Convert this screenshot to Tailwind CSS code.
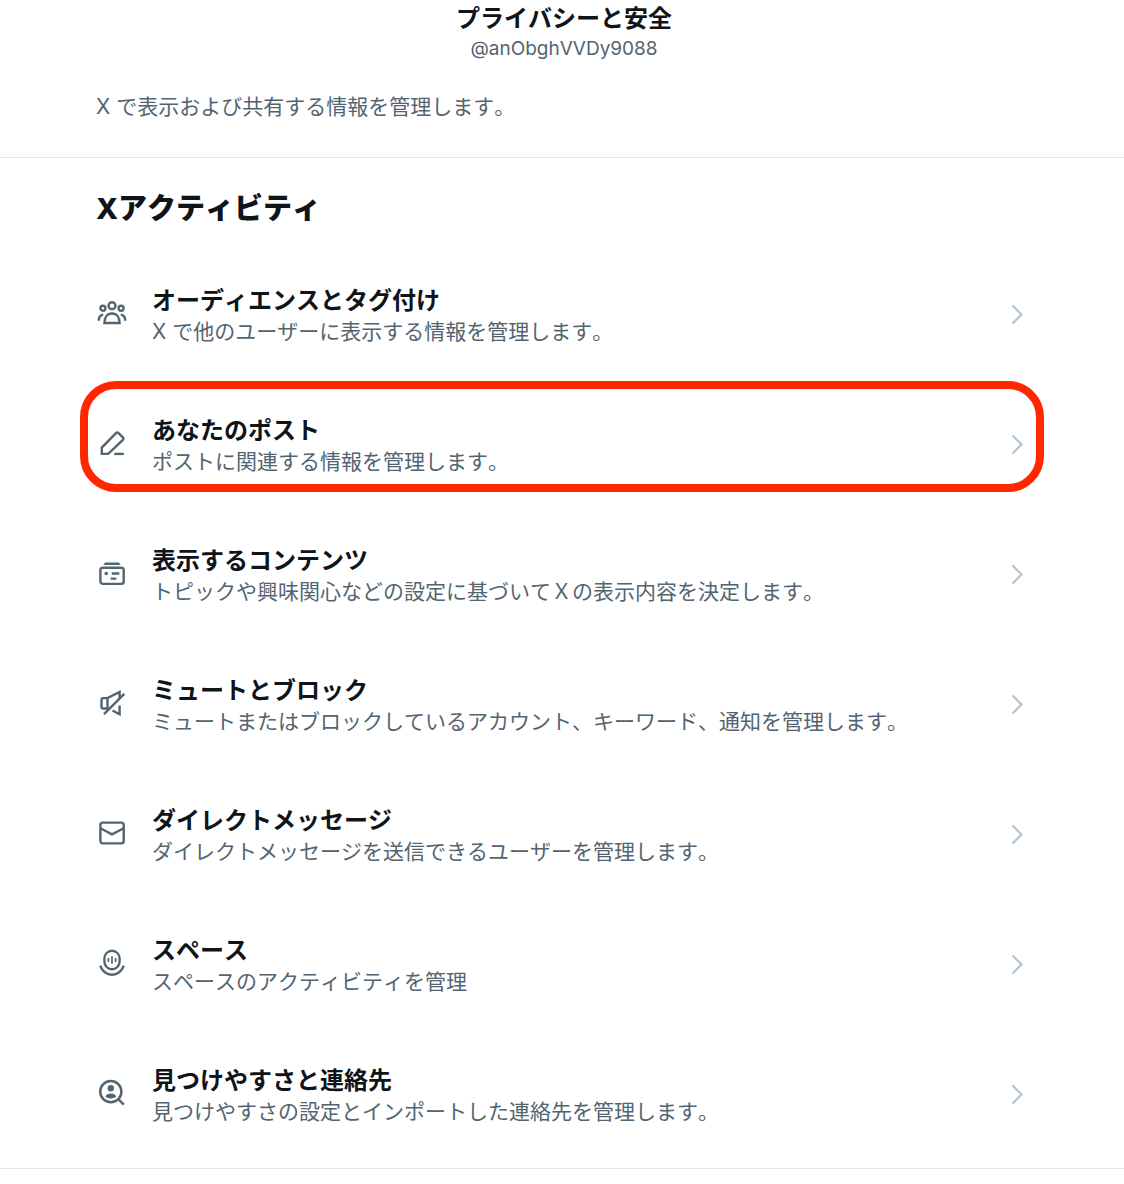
<!DOCTYPE html>
<html lang="ja">
<head>
    <meta charset="UTF-8" />
    <meta name="viewport" content="width=device-width, initial-scale=1.0" />
    <title>プライバシーと安全</title>
    <script src="https://cdn.jsdelivr.net/npm/@tailwindcss/browser@4"></script>
</head>
<body class="bg-white font-['Inter','Noto_Sans_CJK_JP',sans-serif] text-[#0f1419] [font-kerning:none]">

    <!-- Page header -->
    <header class="border-b border-[#e1e8ed]">
        <div class="pt-1 pl-1 text-center">
            <h1 class="text-2xl leading-[30px] font-bold">プライバシーと安全</h1>
            <p class="text-[19px] leading-[30px] text-[#536471]">@anObghVVDy9088</p>
        </div>
        <p class="px-24 pt-7 pb-[35px] text-[21px] leading-[30px] text-[#536471]">X で表示および共有する情報を管理します。</p>
    </header>

    <main class="border-b border-[#e1e8ed] pb-2">
        <h2 class="px-24 pt-8 pb-[22px] text-[29px] leading-[38px] font-extrabold">Xアクティビティ</h2>

        <nav>
            <!-- Audience -->
            <a href="#" class="flex h-[130px] items-center gap-6 px-24">
                <svg class="mb-1 size-8 shrink-0 text-[#536471]" viewBox="0 0 32 32" fill="none" stroke="currentColor" stroke-width="2.4">
                    <circle cx="16" cy="8.8" r="3.5" />
                    <circle cx="6.9" cy="11.2" r="2.5" />
                    <circle cx="25.1" cy="11.2" r="2.5" />
                    <path d="M8.4 26c0-5.4 2.8-9.5 7.6-9.5s7.6 4.1 7.6 9.5z" />
                    <path d="M2.7 23.8c.1-3.500 1.500-5.900 4.600-6.200M29.300 23.800c-.1-3.500-1.500-5.900-4.600-6.200" />
                </svg>
                <div class="flex-1 pt-0.5">
                    <h3 class="text-2xl leading-8 font-bold">オーディエンスとタグ付け</h3>
                    <p class="text-[21px] leading-[30px] text-[#536471]">X で他のユーザーに表示する情報を管理します。</p>
                </div>
                <svg class="size-6 shrink-0 text-[#b2c3cf]" viewBox="0 0 24 24" fill="none" stroke="currentColor" stroke-width="2.2">
                    <path d="M8.5 2.5l9 9-9 9" />
                </svg>
            </a>

            <!-- Your posts (highlighted) -->
            <a href="#" class="relative flex h-[130px] items-center gap-6 px-24">
                <span class="absolute inset-x-20 top-px h-[111px] rounded-[36px] border-8 border-[#ff2600]"></span>
                <svg class="mb-1 size-8 shrink-0 text-[#536471]" viewBox="0 0 32 32" fill="none" stroke="currentColor" stroke-width="2.4">
                    <path d="M5.8 26.9v-6.3L20 6.1q1.300-1.200 2.600 0l4.300 4.300q1.200 1.200 0 2.400L12.200 26.900z" />
                    <path d="M18.3 26.9h9.5" />
                </svg>
                <div class="flex-1 pt-0.5">
                    <h3 class="text-2xl leading-8 font-bold">あなたのポスト</h3>
                    <p class="text-[21px] leading-[30px] text-[#536471]">ポストに関連する情報を管理します。</p>
                </div>
                <svg class="size-6 shrink-0 text-[#b2c3cf]" viewBox="0 0 24 24" fill="none" stroke="currentColor" stroke-width="2.2">
                    <path d="M8.5 2.5l9 9-9 9" />
                </svg>
            </a>

            <!-- Content you see -->
            <a href="#" class="flex h-[130px] items-center gap-6 px-24">
                <svg class="mb-1 size-8 shrink-0 text-[#536471]" viewBox="0 0 32 32" fill="none" stroke="currentColor" stroke-width="2.4">
                    <rect x="4.4" y="10.7" width="23.3" height="16.2" rx="2.3" />
                    <path d="M9 5.6h14l1.6 2.4H7.4z" fill="currentColor" stroke="none" />
                    <circle cx="10.2" cy="16.5" r="1.7" fill="currentColor" stroke="none" />
                    <path d="M15.800 16.500h7.500M14.700 21.600h5.600" />
                </svg>
                <div class="flex-1 pt-0.5">
                    <h3 class="text-2xl leading-8 font-bold">表示するコンテンツ</h3>
                    <p class="text-[21px] leading-[30px] text-[#536471]">トピックや興味関心などの設定に基づいてＸの表示内容を決定します。</p>
                </div>
                <svg class="size-6 shrink-0 text-[#b2c3cf]" viewBox="0 0 24 24" fill="none" stroke="currentColor" stroke-width="2.2">
                    <path d="M8.5 2.5l9 9-9 9" />
                </svg>
            </a>

            <!-- Mute and block -->
            <a href="#" class="flex h-[130px] items-center gap-6 px-24">
                <svg class="mb-1 size-8 shrink-0 text-[#536471]" viewBox="0 0 32 32" fill="none" stroke="currentColor" stroke-width="2.4">
                    <path d="M12.5 21.5H7.2q-1.700 0-1.700-1.700v-7q0-1.700 1.700-1.700h4.300L23.600 5v6.500M11.500 11.100v10.400" />
                    <path d="M28.300 6.800L8 27.100" />
                    <path d="M23.600 18.500v8.700l-7.100-3.700" />
                </svg>
                <div class="flex-1 pt-0.5">
                    <h3 class="text-2xl leading-8 font-bold">ミュートとブロック</h3>
                    <p class="text-[21px] leading-[30px] text-[#536471]">ミュートまたはブロックしているアカウント、キーワード、通知を管理します。</p>
                </div>
                <svg class="size-6 shrink-0 text-[#b2c3cf]" viewBox="0 0 24 24" fill="none" stroke="currentColor" stroke-width="2.2">
                    <path d="M8.5 2.5l9 9-9 9" />
                </svg>
            </a>

            <!-- Direct messages -->
            <a href="#" class="flex h-[130px] items-center gap-6 px-24">
                <svg class="mb-1 size-8 shrink-0 text-[#536471]" viewBox="0 0 32 32" fill="none" stroke="currentColor" stroke-width="2.4">
                    <rect x="4.4" y="5.6" width="23.3" height="20.8" rx="2.3" />
                    <path d="M4.4 11.3L16 17.3l11.7-6" />
                </svg>
                <div class="flex-1 pt-0.5">
                    <h3 class="text-2xl leading-8 font-bold">ダイレクトメッセージ</h3>
                    <p class="text-[21px] leading-[30px] text-[#536471]">ダイレクトメッセージを送信できるユーザーを管理します。</p>
                </div>
                <svg class="size-6 shrink-0 text-[#b2c3cf]" viewBox="0 0 24 24" fill="none" stroke="currentColor" stroke-width="2.2">
                    <path d="M8.5 2.5l9 9-9 9" />
                </svg>
            </a>

            <!-- Spaces -->
            <a href="#" class="flex h-[130px] items-center gap-6 px-24">
                <svg class="mb-1 size-8 shrink-0 text-[#536471]" viewBox="0 0 32 32" fill="none" stroke="currentColor" stroke-width="2.4">
                    <rect x="8.4" y="3.8" width="15.2" height="18.4" rx="7.6" />
                    <path d="M16 9.3v7.4M12.4 11v4M19.6 11v4" stroke-width="1.7" />
                    <path d="M4.2 18.8c2.1 5.4 6.6 8.9 11.8 8.9s9.7-3.5 11.8-8.9" />
                </svg>
                <div class="flex-1 pt-0.5">
                    <h3 class="text-2xl leading-8 font-bold">スペース</h3>
                    <p class="text-[21px] leading-[30px] text-[#536471]">スペースのアクティビティを管理</p>
                </div>
                <svg class="size-6 shrink-0 text-[#b2c3cf]" viewBox="0 0 24 24" fill="none" stroke="currentColor" stroke-width="2.2">
                    <path d="M8.5 2.5l9 9-9 9" />
                </svg>
            </a>

            <!-- Discoverability -->
            <a href="#" class="flex h-[130px] items-center gap-6 px-24">
                <svg class="mb-1 size-8 shrink-0 text-[#536471]" viewBox="0 0 32 32" fill="none" stroke="currentColor" stroke-width="2.5">
                    <circle cx="14.8" cy="14.7" r="10.6" />
                    <path d="M22.3 22.2l5.500 5.500" />
                    <circle cx="14.8" cy="11.3" r="3.2" fill="currentColor" stroke="none" />
                    <path d="M9.3 19.6c.7-2 2.9-3.2 5.5-3.2s4.8 1.2 5.5 3.2c-1.3 1.3-3.3 2-5.5 2s-4.2-.7-5.5-2z" fill="currentColor" stroke="none" />
                </svg>
                <div class="flex-1 pt-0.5">
                    <h3 class="text-2xl leading-8 font-bold">見つけやすさと連絡先</h3>
                    <p class="text-[21px] leading-[30px] text-[#536471]">見つけやすさの設定とインポートした連絡先を管理します。</p>
                </div>
                <svg class="size-6 shrink-0 text-[#b2c3cf]" viewBox="0 0 24 24" fill="none" stroke="currentColor" stroke-width="2.2">
                    <path d="M8.5 2.5l9 9-9 9" />
                </svg>
            </a>
        </nav>
    </main>

</body>
</html>
